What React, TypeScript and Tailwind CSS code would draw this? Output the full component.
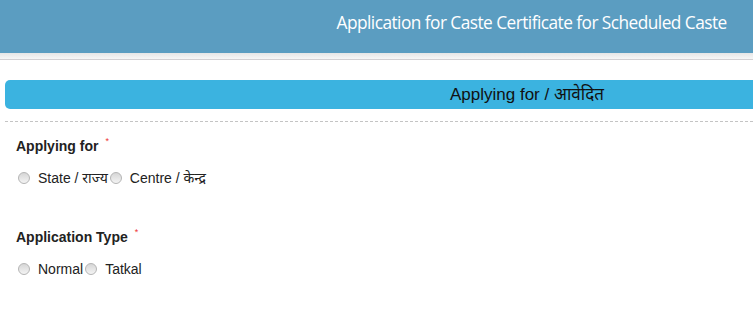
export default function App() {
  const Radio = ({ label }: { label: string }) => (
    <label className="flex items-center">
      <span className="w-[12px] h-[12px] rounded-full border border-[#b5b5b5] bg-gradient-to-b from-[#d6d6d6] to-[#f4f4f4] ml-[2px] mr-[8px]" />
      <span>{label}</span>
    </label>
  );

  return (
    <div className="w-[753px] h-[315px] bg-white overflow-hidden font-['Liberation_Sans','Noto_Sans',sans-serif] text-[#222]">
      {/* Header */}
      <header className="h-[53px] bg-[#5b9dc1] flex items-center justify-end pr-[26px] pb-[8px]">
        <h1 className="text-white text-[19px] font-['Open_Sans',sans-serif] tracking-[-0.6px] scale-x-[0.91] origin-right">
          Application for Caste Certificate for Scheduled Caste
        </h1>
      </header>
      <div className="h-[7px] bg-gradient-to-b from-[#e6e6e6] to-[#f7f7f7] border-b border-[#d3d0d3]" />

      {/* Section */}
      <div className="pl-[5px] pt-[20px]">
        <div className="h-[29px] bg-[#3bb3e0] rounded-l-[5px] flex items-center pl-[445px] text-[17px] text-[#111]">
          Applying for / आवेदित
        </div>
        <div className="mt-[12px] border-t border-dashed border-[#c4c4c4]" />
      </div>

      <div className="pl-[16px] text-[14px] leading-[20px]">
        <div className="mt-[14px] font-bold flex">
          Applying for
          <span className="text-[#e33] text-[9px] leading-[10px] font-normal ml-[7px]">*</span>
        </div>
        <div className="mt-[12px] flex">
          <Radio label="State / राज्य" />
          <Radio label="Centre / केन्द्र" />
        </div>

        <div className="mt-[39px] font-bold flex">
          Application Type
          <span className="text-[#e33] text-[9px] leading-[10px] font-normal ml-[7px]">*</span>
        </div>
        <div className="mt-[12px] flex">
          <Radio label="Normal" />
          <Radio label="Tatkal" />
        </div>
      </div>
    </div>
  );
}
